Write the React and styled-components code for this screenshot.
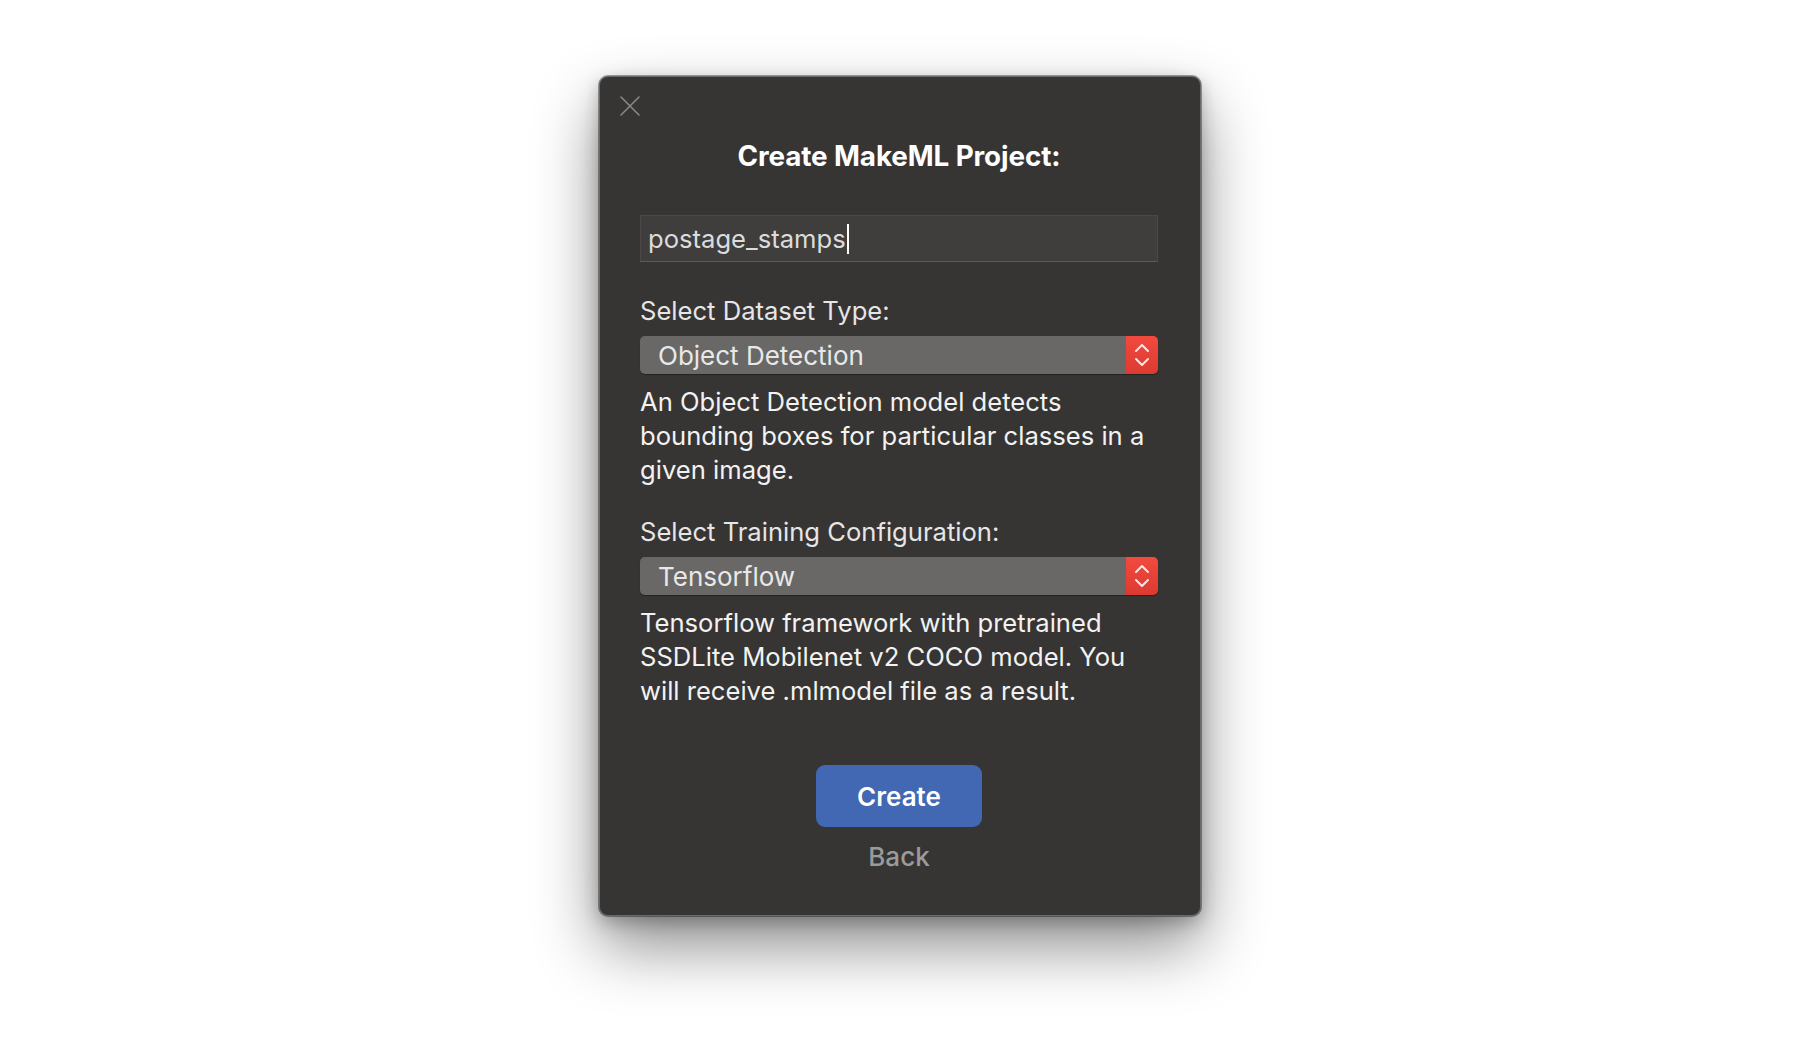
import React from "react";
import styled, { createGlobalStyle } from "styled-components";

const Global = createGlobalStyle`
  html, body { margin: 0; padding: 0; background: #ffffff; }
  body { font-family: Inter, "Noto Sans", "Liberation Sans", sans-serif; -webkit-font-smoothing: antialiased; }
  * { box-sizing: border-box; }
`;

const Page = styled.div`
  width: 1800px;
  height: 1064px;
  display: flex;
  justify-content: center;
  align-items: flex-start;
  padding-top: 76px;
  background: #ffffff;
`;

const Dialog = styled.div`
  width: 602px;
  height: 840px;
  background: #363534;
  border: 1px solid #6a6a6a;
  border-radius: 9px;
  box-shadow: 0 0 0 1px rgba(0,0,0,0.35), 0 30px 64px rgba(0,0,0,0.45), 0 6px 18px rgba(0,0,0,0.25);
  display: flex;
  flex-direction: column;
  padding: 0 42px 0 40px;
`;

const CloseRow = styled.div`
  height: 62px;
  display: flex;
  align-items: flex-start;
  padding-top: 19px;
  margin-left: -20px;
`;

const CloseButton = styled.button`
  width: 20px;
  height: 20px;
  border: none;
  background: transparent;
  padding: 0;
  display: flex;
  align-items: center;
  justify-content: center;
  cursor: pointer;
`;

const Title = styled.h1`
  margin: 0;
  font-size: 27.8px;
  line-height: 34px;
  font-weight: 700;
  color: #ffffff;
  text-align: center;
  letter-spacing: -0.1px;
`;

const NameInput = styled.div`
  margin-top: 42px;
  height: 47px;
  background: #3f3e3d;
  border: 1px solid #4a4948;
  border-bottom-color: #5c5b5a;
  display: flex;
  align-items: center;
  padding-left: 7px;
  font-size: 25.6px;
  color: #dcdcdc;
`;

const Caret = styled.span`
  display: inline-block;
  width: 2px;
  height: 30px;
  background: #ffffff;
  margin-left: 1px;
`;

const Label = styled.div`
  margin-top: ${p => p.$top}px;
  font-size: 25.6px;
  line-height: 30px;
  color: #e6e6e6;
`;

const Select = styled.div`
  margin-top: 10px;
  height: 38px;
  display: flex;
  border-radius: 5px;
  overflow: hidden;
  box-shadow: 0 1px 1px rgba(0,0,0,0.35), inset 0 1px 0 rgba(255,255,255,0.08);
`;

const SelectValue = styled.div`
  flex: 1;
  background: #696866;
  display: flex;
  align-items: center;
  padding-left: 18px;
  font-size: 26px;
  color: #e8e8e8;
`;

const Stepper = styled.div`
  width: 32px;
  background: linear-gradient(#f24a3f, #dc3a31);
  display: flex;
  align-items: center;
  justify-content: center;
`;

const Description = styled.p`
  margin: 11px 0 0;
  font-size: 25.6px;
  line-height: 34px;
  color: #f2f2f2;
`;

const Actions = styled.div`
  margin-top: ${p => p.$top}px;
  display: flex;
  flex-direction: column;
  align-items: center;
`;

const PrimaryButton = styled.button`
  width: 166px;
  height: 62px;
  border: none;
  border-radius: 9px;
  background: #4267b3;
  color: #ffffff;
  font-family: inherit;
  font-size: 26px;
  font-weight: 600;
  cursor: pointer;
`;

const LinkButton = styled.button`
  margin-top: 15px;
  padding: 0;
  line-height: 30px;
  border: none;
  background: transparent;
  color: #9b9b9b;
  font-family: inherit;
  font-size: 26px;
  font-weight: 500;
  cursor: pointer;
`;

const XIcon = () => (
  <svg width="20" height="20" viewBox="0 0 20 20">
    <path d="M1 1 L19 19 M19 1 L1 19" stroke="#8a8a8a" strokeWidth="1.5" strokeLinecap="round" />
  </svg>
);

const UpDown = () => (
  <svg width="16" height="26" viewBox="0 0 16 26">
    <path d="M2 9 L8 3 L14 9 M2 17 L8 23 L14 17" fill="none" stroke="#ffe6e4" strokeWidth="2" strokeLinecap="round" strokeLinejoin="round" />
  </svg>
);

export default function App() {
  return (
    <Page>
      <Global />
      <Dialog>
        <CloseRow>
          <CloseButton aria-label="Close"><XIcon /></CloseButton>
        </CloseRow>
        <Title>Create MakeML Project:</Title>
        <NameInput>postage_stamps<Caret /></NameInput>

        <Label $top={34}>Select Dataset Type:</Label>
        <Select>
          <SelectValue>Object Detection</SelectValue>
          <Stepper><UpDown /></Stepper>
        </Select>
        <Description>
          An Object Detection model detects bounding boxes for particular classes in a given image.
        </Description>

        <Label $top={30}>Select Training Configuration:</Label>
        <Select>
          <SelectValue>Tensorflow</SelectValue>
          <Stepper><UpDown /></Stepper>
        </Select>
        <Description>
          Tensorflow framework with pretrained SSDLite Mobilenet v2 COCO model. You will receive .mlmodel file as a result.
        </Description>

        <Actions $top={57}>
          <PrimaryButton>Create</PrimaryButton>
          <LinkButton>Back</LinkButton>
        </Actions>
      </Dialog>
    </Page>
  );
}
